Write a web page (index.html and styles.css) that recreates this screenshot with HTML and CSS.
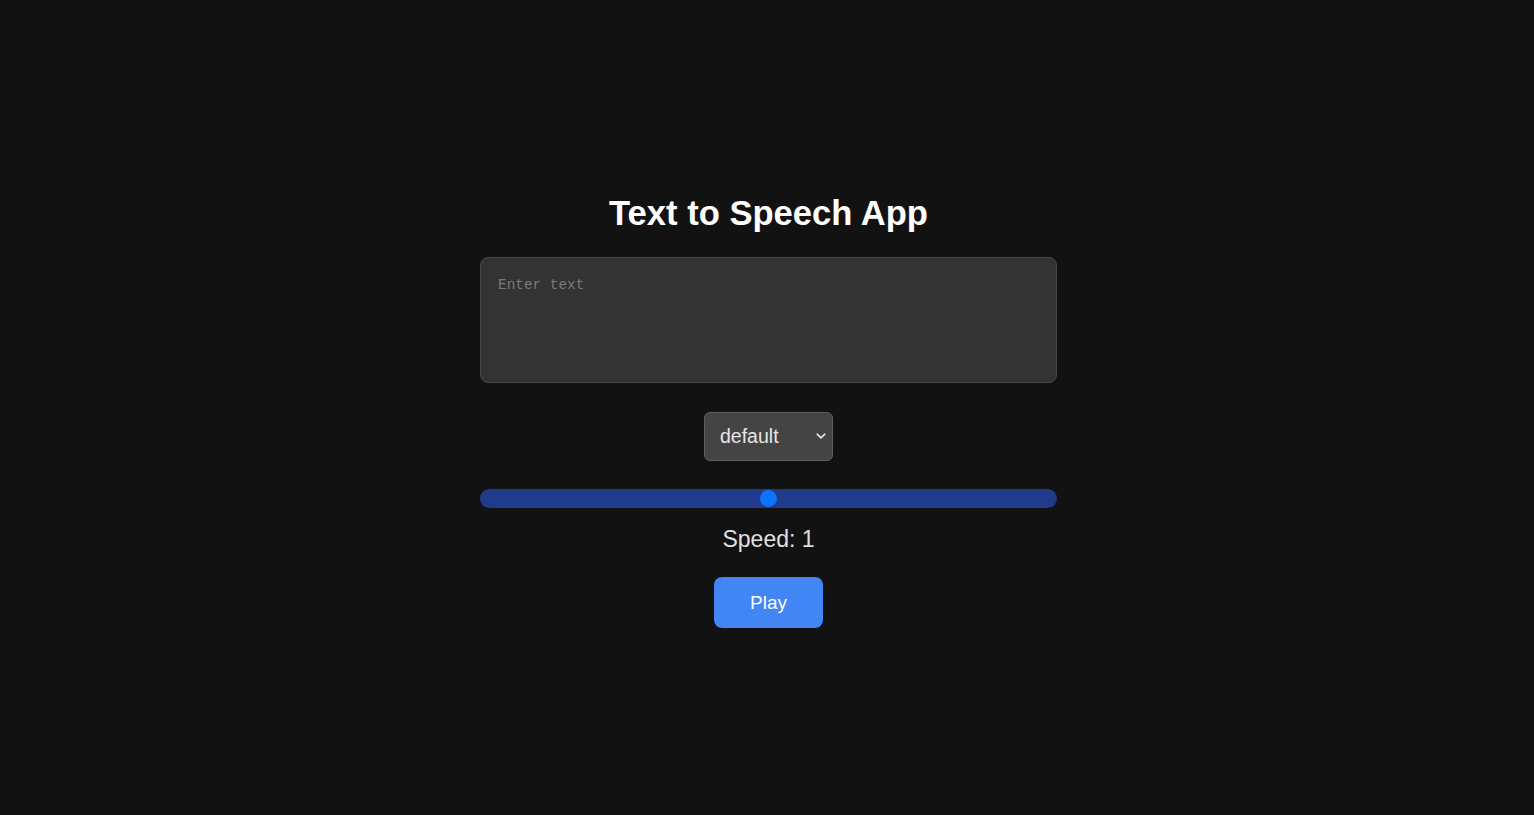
FILE: index.html
```html
<!DOCTYPE html>
<html lang="en">
<head>
<meta charset="utf-8">
<title>Text to Speech App</title>
<link rel="stylesheet" href="styles.css">
</head>
<body>
<main class="app">
  <h1 class="title">Text to Speech App</h1>
  <textarea class="text-input" placeholder="Enter text"></textarea>
  <div class="select-wrap">
    <select class="voice-select">
      <option>default</option>
    </select>
    <svg class="chevron" width="10" height="6" viewBox="0 0 10 6" aria-hidden="true">
      <path d="M1.2 1.2 L5 4.8 L8.8 1.2" fill="none" stroke="#e6e6e6" stroke-width="1.6" stroke-linecap="round" stroke-linejoin="round"/>
    </svg>
  </div>
  <input class="speed-range" type="range" min="0.5" max="1.5" step="0.1" value="1">
  <p class="speed-label">Speed: 1</p>
  <button class="play-btn">Play</button>
</main>
</body>
</html>
```

FILE: styles.css
```css
* { box-sizing: border-box; }
html, body { margin: 0; padding: 0; }
body {
  background: #121212;
  color: #e0e0e0;
  font-family: "Liberation Sans", Arial, sans-serif;
  min-height: 100vh;
  padding: 5px 0 0 3px;
  display: flex;
  align-items: center;
  justify-content: center;
}
.app {
  width: 577px;
  display: flex;
  flex-direction: column;
  align-items: center;
}
.title {
  margin: 0;
  font-size: 34.6px;
  line-height: 40px;
  font-weight: 700;
  color: #ffffff;
  padding-top: 1px;
}
.text-input {
  display: block;
  margin-top: 24px;
  width: 577px;
  height: 126px;
  padding: 18px 17px 16px;
  background: #333333;
  border: 1px solid #474747;
  border-radius: 8px;
  color: #e0e0e0;
  font-family: "Liberation Mono", Consolas, monospace;
  font-size: 14.4px;
  line-height: 18px;
  resize: none;
  outline: none;
}
.text-input::placeholder { color: #7a7a7a; }
.select-wrap {
  position: relative;
  margin-top: 29px;
}
.voice-select {
  appearance: none;
  -webkit-appearance: none;
  display: block;
  width: 129px;
  height: 49px;
  padding: 0 15px 2px;
  background: #444444;
  border: 1px solid #5e5e5e;
  border-radius: 6px;
  color: #e6e6e6;
  font-family: "Liberation Sans", Arial, sans-serif;
  font-size: 19.5px;
  outline: none;
}
.chevron {
  position: absolute;
  right: 7px;
  top: 21px;
  pointer-events: none;
}
.speed-range {
  -webkit-appearance: none;
  appearance: none;
  display: block;
  margin: 28px 0 0;
  width: 577px;
  height: 19px;
  border-radius: 10px;
  background: #213b8c;
  outline: none;
}
.speed-range::-webkit-slider-thumb {
  -webkit-appearance: none;
  appearance: none;
  width: 17px;
  height: 17px;
  border-radius: 50%;
  background: #0a74ff;
  border: none;
}
.speed-label {
  margin: 18px 0 0;
  font-size: 23px;
  line-height: 26px;
  color: #e0e0e0;
}
.play-btn {
  margin-top: 25px;
  width: 109px;
  height: 51px;
  background: #4285f4;
  border: none;
  border-radius: 8px;
  color: #ffffff;
  font-family: "Liberation Sans", Arial, sans-serif;
  font-size: 19px;
  cursor: pointer;
}
```
